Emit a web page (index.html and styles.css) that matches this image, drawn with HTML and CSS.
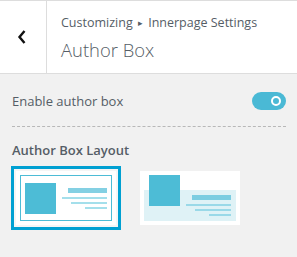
FILE: index.html
```html
<!DOCTYPE html>
<html>
<head>
<meta charset="utf-8">
<link rel="stylesheet" href="styles.css">
</head>
<body>
<div class="header">
  <div class="back">
    <svg width="10" height="16" viewBox="0 0 10 16"><polyline points="7.5,2 2.5,8 7.5,14" fill="none" stroke="#111" stroke-width="2.4"/></svg>
  </div>
  <div class="titles">
    <div class="crumb">Customizing <span class="tri">▸</span> Innerpage Settings</div>
    <div class="title">Author Box</div>
  </div>
</div>
<div class="content">
  <div class="row">
    <span class="label">Enable author box</span>
    <span class="toggle"><span class="knob"></span></span>
  </div>
  <div class="sep"></div>
  <div class="heading">Author Box Layout</div>
  <div class="options">
    <div class="opt selected">
      <svg class="pic" width="100" height="54" viewBox="0 0 100 54">
        <rect width="100" height="54" fill="#fff"/>
        <rect x="4.5" y="4.5" width="91" height="45" fill="none" stroke="#4dbcd6"/>
        <rect x="9" y="12" width="31" height="31" fill="#4dbcd6"/>
        <rect x="52" y="17" width="39" height="5" fill="#84d0e3"/>
        <rect x="46" y="26" width="45" height="2" fill="#a4dfeb"/>
        <rect x="55" y="31" width="36" height="2" fill="#a4dfeb"/>
        <rect x="69" y="36" width="22" height="2" fill="#a4dfeb"/>
      </svg>
    </div>
    <div class="opt">
      <svg class="pic" width="100" height="54" viewBox="0 0 100 54">
        <rect width="100" height="54" fill="#fff"/>
        <rect x="4" y="19" width="92" height="31" fill="#dff2f6"/>
        <rect x="9" y="4" width="31" height="31" fill="#4dbcd6"/>
        <rect x="52" y="24" width="39" height="5" fill="#7ccde1"/>
        <rect x="46" y="33" width="45" height="2" fill="#9ad9e8"/>
        <rect x="55" y="38" width="36" height="2" fill="#9ad9e8"/>
        <rect x="69" y="43" width="22" height="2" fill="#9ad9e8"/>
      </svg>
    </div>
  </div>
</div>
</body>
</html>
```
FILE: styles.css
```css
* { box-sizing: border-box; }
body {
  margin: 0;
  background: #f1f1f1;
  font-family: "Open Sans", "Noto Sans", sans-serif;
  color: #555d66;
}
.header {
  display: flex;
  height: 74px;
  background: #fff;
  border-top: 1px solid #ddd;
  border-bottom: 1px solid #ddd;
}
.back {
  width: 47px;
  border-right: 1px solid #ddd;
  display: flex;
  align-items: center;
  justify-content: center;
  padding-right: 3px;
}
.back svg { display: block; }
.titles {
  padding: 13px 0 0 14px;
}
.crumb {
  font-size: 12.5px;
  line-height: 18px;
  color: #555d66;
}
.tri { font-size: 9px; position: relative; top: -1px; padding: 0 2px; }
.title {
  font-size: 18.4px;
  line-height: 26px;
  margin-top: 4px;
  font-weight: 300;
  color: #555d66;
}
.content {
  padding: 0 11px 0 12px;
}
.row {
  display: flex;
  justify-content: space-between;
  align-items: center;
  margin-top: 18px;
  height: 18px;
}
.label { font-size: 13px; }
.toggle {
  width: 34px;
  height: 18px;
  border-radius: 9px;
  background: #4ab9d5;
  display: flex;
  align-items: center;
  justify-content: flex-end;
  padding-right: 5px;
}
.knob {
  width: 10px;
  height: 10px;
  border-radius: 50%;
  border: 2px solid #fff;
}
.sep {
  margin-top: 16px;
  border-top: 1px dashed #b8b8b8;
}
.heading {
  margin-top: 14px;
  font-size: 13px;
  font-weight: 600;
  line-height: 18px;
}
.options {
  display: flex;
  gap: 14px;
  margin-top: 7px;
  margin-left: -1px;
}
.opt {
  border: 3px solid transparent;
  padding: 2px;
  background: transparent;
}
.opt.selected {
  border-color: #00a0d2;
  background: #f5f5f5;
}
.pic { display: block; }
```
